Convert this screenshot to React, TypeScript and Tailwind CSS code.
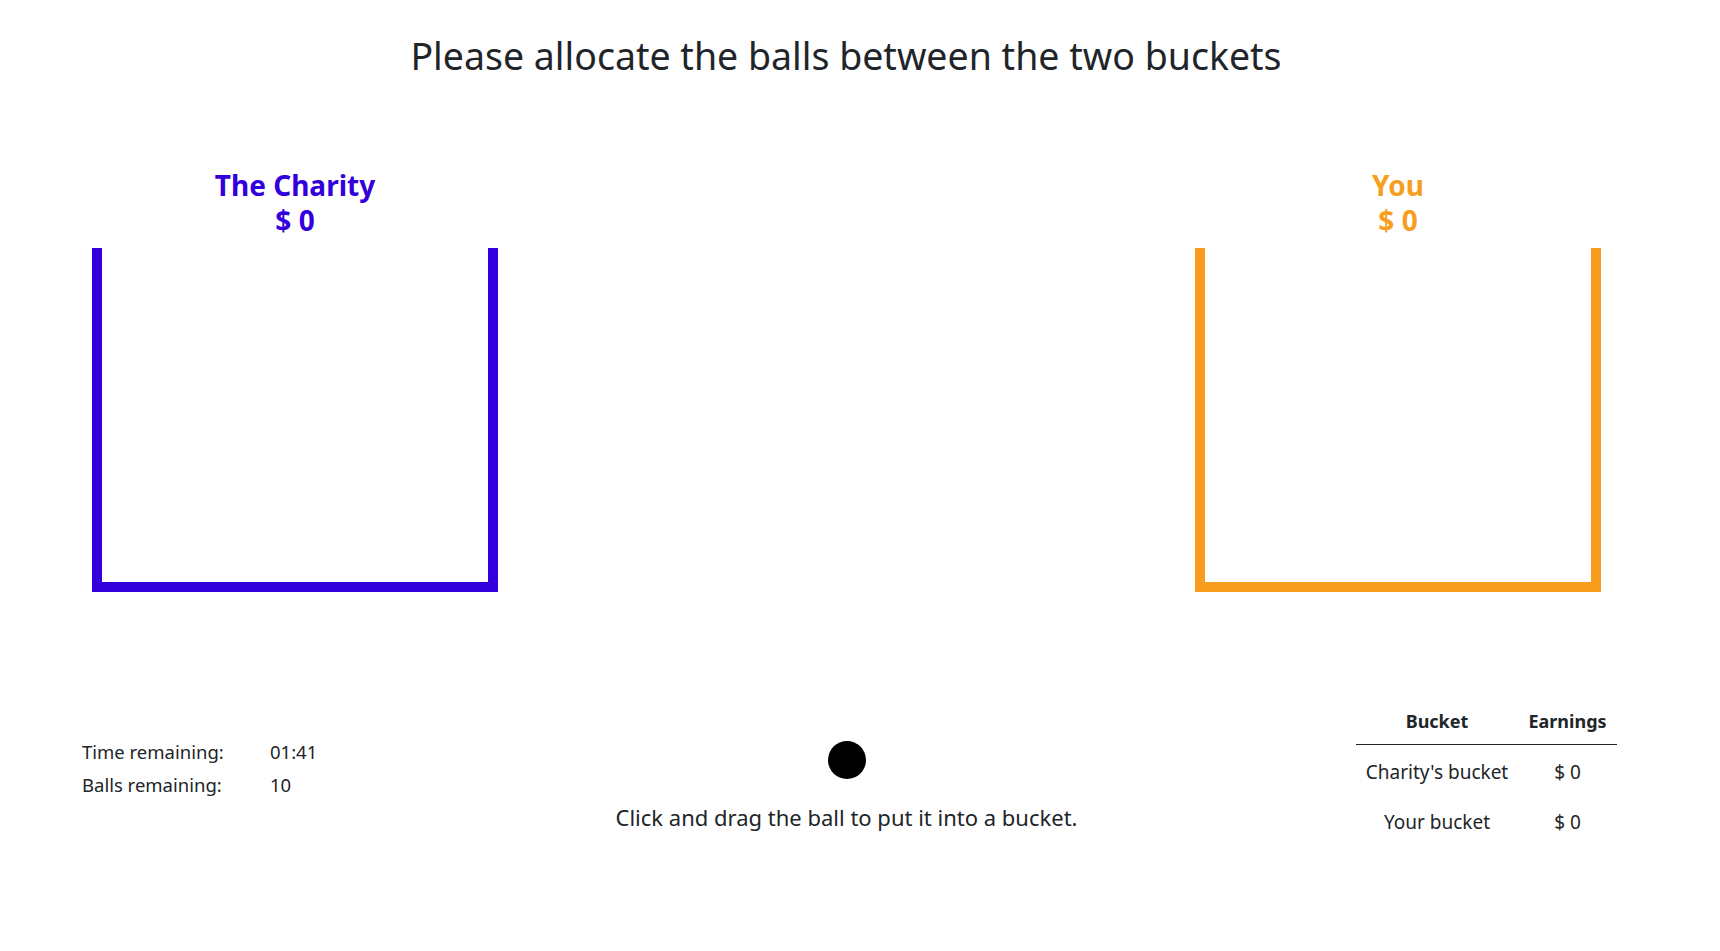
import React from "react";

export default function App() {
  const font = { fontFamily: '"Noto Sans", "Open Sans", sans-serif' };
  return (
    <div className="w-full h-[951px] bg-white text-[#212529] overflow-hidden" style={font}>
      <h1 className="pt-[32px] pr-[28px] text-center text-[37.5px] leading-[48px] font-normal">
        Please allocate the balls between the two buckets
      </h1>

      <div className="mt-[88px] flex justify-between pl-[92px] pr-[119px]">
        <div className="flex flex-col items-center">
          <div className="text-center font-bold text-[28px] leading-[35px] text-[#3300dd]">
            <div>The Charity</div>
            <div>$ 0</div>
          </div>
          <div className="mt-[10px] w-[406px] h-[344px] border-l-[10px] border-r-[10px] border-b-[10px] border-[#3300dd]" />
        </div>
        <div className="flex flex-col items-center">
          <div className="text-center font-bold text-[28px] leading-[35px] text-[#f79e1e]">
            <div>You</div>
            <div>$ 0</div>
          </div>
          <div className="mt-[10px] w-[406px] h-[344px] border-l-[10px] border-r-[10px] border-b-[10px] border-[#f79e1e]" />
        </div>
      </div>

      <div className="mt-[108px] flex items-start">
        <div className="w-[600px] pl-[82px] pt-[35px] text-[18.5px] leading-[33px]">
          <div className="grid grid-cols-[188px_auto]">
            <div>Time remaining:</div>
            <div>01:41</div>
            <div>Balls remaining:</div>
            <div>10</div>
          </div>
        </div>
        <div className="w-[493px] flex flex-col items-center pt-[41px]">
          <div className="w-[38px] h-[38px] rounded-full bg-black" />
          <div className="mt-[22px] text-[22px] leading-[32px]">
            Click and drag the ball to put it into a bucket.
          </div>
        </div>
        <div className="ml-[263px]">
          <table className="w-[261px] text-[18px] leading-[27px] border-collapse">
            <thead>
              <tr className="border-b border-[#212529]">
                <th className="w-[162px] pt-[8px] pb-[9px] font-bold text-center">Bucket</th>
                <th className="w-[99px] pt-[8px] pb-[9px] font-bold text-center">Earnings</th>
              </tr>
            </thead>
            <tbody className="text-[19px]">
              <tr>
                <td className="pt-[14px] pb-[9px] text-center">Charity's bucket</td>
                <td className="pt-[14px] pb-[9px] text-center">$ 0</td>
              </tr>
              <tr>
                <td className="pt-[14px] pb-[9px] text-center">Your bucket</td>
                <td className="pt-[14px] pb-[9px] text-center">$ 0</td>
              </tr>
            </tbody>
          </table>
        </div>
      </div>
    </div>
  );
}
